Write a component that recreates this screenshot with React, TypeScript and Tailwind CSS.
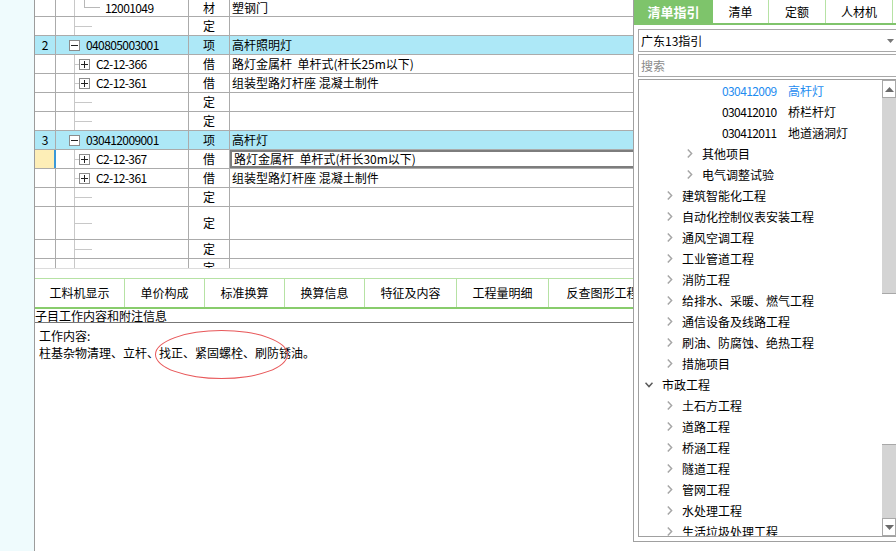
import React from 'react';

type Kind = 'mat' | 'ding' | 'item' | 'sub';

interface Row {
  kind: Kind;
  no?: string;
  code?: string;
  unit: string;
  name?: string;
  sel?: boolean;
  tall?: boolean;
  first?: boolean;
}

const rows: Row[] = [
  { kind: 'mat', code: '12001049', unit: '材', name: '塑钢门', first: true },
  { kind: 'ding', unit: '定' },
  { kind: 'item', no: '2', code: '040805003001', unit: '项', name: '高杆照明灯' },
  { kind: 'sub', code: 'C2-12-366', unit: '借', name: '路灯金属杆  单杆式(杆长25m以下)' },
  { kind: 'sub', code: 'C2-12-361', unit: '借', name: '组装型路灯杆座 混凝土制件' },
  { kind: 'ding', unit: '定' },
  { kind: 'ding', unit: '定' },
  { kind: 'item', no: '3', code: '030412009001', unit: '项', name: '高杆灯' },
  { kind: 'sub', code: 'C2-12-367', unit: '借', name: '路灯金属杆  单杆式(杆长30m以下)', sel: true },
  { kind: 'sub', code: 'C2-12-361', unit: '借', name: '组装型路灯杆座 混凝土制件' },
  { kind: 'ding', unit: '定' },
  { kind: 'ding', unit: '定', tall: true },
  { kind: 'ding', unit: '定' },
  { kind: 'ding', unit: '定' },
];

const bottomTabs = [
  { label: '工料机显示', w: 'w-[90px]' },
  { label: '单价构成', w: 'w-[80px]' },
  { label: '标准换算', w: 'w-[80px]' },
  { label: '换算信息', w: 'w-[80px]' },
  { label: '特征及内容', w: 'w-[92px]' },
  { label: '工程量明细', w: 'w-[92px]' },
  { label: '反查图形工程量', w: 'w-[120px]' },
];

type Node =
  | { t: 'code'; code: string; name: string; active?: boolean }
  | { t: 0 | 1 | 2; name: string };

const tree: Node[] = [
  { t: 'code', code: '030412009', name: '高杆灯', active: true },
  { t: 'code', code: '030412010', name: '桥栏杆灯' },
  { t: 'code', code: '030412011', name: '地道涵洞灯' },
  { t: 2, name: '其他项目' },
  { t: 2, name: '电气调整试验' },
  { t: 1, name: '建筑智能化工程' },
  { t: 1, name: '自动化控制仪表安装工程' },
  { t: 1, name: '通风空调工程' },
  { t: 1, name: '工业管道工程' },
  { t: 1, name: '消防工程' },
  { t: 1, name: '给排水、采暖、燃气工程' },
  { t: 1, name: '通信设备及线路工程' },
  { t: 1, name: '刷油、防腐蚀、绝热工程' },
  { t: 1, name: '措施项目' },
  { t: 0, name: '市政工程' },
  { t: 1, name: '土石方工程' },
  { t: 1, name: '道路工程' },
  { t: 1, name: '桥涵工程' },
  { t: 1, name: '隧道工程' },
  { t: 1, name: '管网工程' },
  { t: 1, name: '水处理工程' },
  { t: 1, name: '生活垃圾处理工程' },
];

function ExpandBox({ plus }: { plus?: boolean }) {
  return (
    <span className="flex h-[11px] w-[11px] shrink-0 items-center justify-center self-center border border-[#8c8c8c] bg-white">
      <svg width="7" height="7" viewBox="0 0 7 7">
        <path d={plus ? 'M0 3.5h7M3.5 0v7' : 'M0 3.5h7'} stroke="#222" strokeWidth="1" />
      </svg>
    </span>
  );
}

function CodeCell({ row }: { row: Row }) {
  if (row.kind === 'item') {
    return (
      <div className="flex h-full items-center pl-[13px]">
        <ExpandBox />
        <span className="ml-[6px] tracking-[-0.6px]">{row.code}</span>
      </div>
    );
  }
  return (
    <div className="flex h-full">
      <span className="ml-[18px] w-px self-stretch bg-[#c8c8c8]" />
      {row.kind === 'ding' && <span className="h-px w-[17px] self-center bg-[#c8c8c8]" />}
      {row.kind === 'sub' && (
        <>
          <span className="h-px w-[4px] self-center bg-[#c8c8c8]" />
          <ExpandBox plus />
          <span className="ml-[6px] self-center tracking-[-0.6px]">{row.code}</span>
        </>
      )}
      {row.kind === 'mat' && (
        <>
          <span className="ml-[9px] h-1/2 w-[16px] self-start border-b border-l border-[#b8b8b8]" />
          <span className="ml-[5px] self-center tracking-[-0.6px]">{row.code}</span>
        </>
      )}
    </div>
  );
}

function TableRow({ row }: { row: Row }) {
  const hl = row.kind === 'item';
  const h = row.first ? 'h-[17px]' : row.tall ? 'h-[33px]' : 'h-[19px]';
  return (
    <div className={`flex border-b border-[#ababab] ${h} ${hl ? 'bg-[#ade8f7]' : 'bg-white'}`}>
      <div
        className={`flex w-[21px] shrink-0 items-center justify-center border-r ${
          row.sel ? 'border-r-2 border-[#3a98d8] bg-[#fdeeb7]' : 'border-[#ababab]'
        }`}
      >
        {row.no}
      </div>
      <div className="w-[133px] shrink-0 border-r border-[#ababab]">
        <CodeCell row={row} />
      </div>
      <div className="flex w-[41px] shrink-0 items-center justify-center border-r border-[#ababab]">
        {row.unit}
      </div>
      <div
        className={`flex min-w-0 flex-1 items-center whitespace-pre pl-[2px] ${
          row.sel ? 'border-2 border-r-0 border-[#7d7d7d] pl-0' : ''
        }`}
      >
        {row.name}
      </div>
    </div>
  );
}

function Chevron({ down }: { down?: boolean }) {
  if (down) {
    return (
      <svg width="8" height="6" viewBox="0 0 8 6" className="shrink-0">
        <path d="M0.5 0.8 4 4.6 7.5 0.8" fill="none" stroke="#5a5a5a" strokeWidth="1.5" />
      </svg>
    );
  }
  return (
    <svg width="6" height="9" viewBox="0 0 6 9" className="shrink-0">
      <path d="M0.8 0.6 4.6 4.5 0.8 8.4" fill="none" stroke="#a6a6a6" strokeWidth="1.5" />
    </svg>
  );
}

function TreeItem({ node }: { node: Node }) {
  if (node.t === 'code') {
    return (
      <div
        className={`flex h-[21px] items-center whitespace-nowrap pl-[83px] ${
          node.active ? 'text-[#1e8cf0]' : 'text-black'
        }`}
      >
        <span className="w-[66px] tracking-[-0.6px]">{node.code}</span>
        <span>{node.name}</span>
      </div>
    );
  }
  if (node.t === 0) {
    return (
      <div className="flex h-[21px] items-center whitespace-nowrap pl-[6px]">
        <Chevron down />
        <span className="ml-[9px]">{node.name}</span>
      </div>
    );
  }
  return (
    <div
      className={`flex h-[21px] items-center whitespace-nowrap ${node.t === 2 ? 'pl-[48px]' : 'pl-[28px]'}`}
    >
      <Chevron />
      <span className="ml-[9px]">{node.name}</span>
    </div>
  );
}

function ScrollArrow({ up }: { up?: boolean }) {
  return (
    <div className="flex h-[18px] shrink-0 items-center justify-center border border-[#a8a8a8] bg-white">
      <svg width="9" height="5" viewBox="0 0 9 5">
        <path d={up ? 'M0 5 4.5 0 9 5z' : 'M0 0 4.5 5 9 0z'} fill="#6b6b6b" />
      </svg>
    </div>
  );
}

function GuidePanel() {
  return (
    <div className="flex h-[542px] w-[263px] shrink-0 flex-col border-b border-l border-[#a0a0a0] pl-[4px]">
      {/* tabs */}
      <div className="-ml-[4px] flex h-[25px] shrink-0 border-b-2 border-[#80c46c] text-[12px]">
        <div className="flex w-[79px] items-center justify-center bg-[#7ec46b] text-[13px] font-bold text-white">
          清单指引
        </div>
        <div className="flex w-[56px] items-center justify-center border-r border-[#b6e2a4]">清单</div>
        <div className="flex w-[57px] items-center justify-center border-r border-[#b6e2a4]">定额</div>
        <div className="flex w-[67px] items-center justify-center border-r border-[#b6e2a4]">人材机</div>
      </div>

      {/* select */}
      <div className="mt-[4px] flex h-[23px] shrink-0 items-center justify-between border border-r-0 border-[#a8a8a8] pl-[2px] pr-[2px]">
        <span>广东13指引</span>
        <svg width="7" height="4" viewBox="0 0 7 4">
          <path d="M0 0 3.5 4 7 0z" fill="#777" />
        </svg>
      </div>

      {/* search */}
      <div className="mt-[2px] flex h-[23px] shrink-0 items-center border border-r-0 border-[#a8a8a8] pl-[2px] text-[#8a8a8a]">
        搜索
      </div>

      {/* list */}
      <div className="mb-[4px] mt-[2px] flex min-h-0 flex-1 border border-r-0 border-[#a0a0a0]">
        <div className="min-w-0 flex-1 overflow-hidden">
          {tree.map((n, i) => (
            <TreeItem key={i} node={n} />
          ))}
        </div>
        <div className="flex w-[14px] shrink-0 flex-col">
          <ScrollArrow up />
          <div className="h-[195px] bg-[#d4d4d4]" />
          <div className="h-[152px] border-y border-[#a8a8a8] bg-white" />
          <div className="flex-1 bg-[#d4d4d4]" />
          <ScrollArrow />
        </div>
      </div>
    </div>
  );
}

export default function App() {
  return (
    <div className="flex h-[551px] w-[896px] overflow-hidden bg-white font-['Noto_Sans_CJK_SC',sans-serif] text-[12px] leading-none text-black">
      <div className="w-[34px] shrink-0 bg-[#effbfd]" />

      <div className="flex w-[599px] shrink-0 flex-col border-l border-[#9c9c9c]">
        {/* grid */}
        <div className="h-[269px] shrink-0 overflow-hidden border-b border-[#dcdcdc]">
          {rows.map((r, i) => (
            <TableRow key={i} row={r} />
          ))}
        </div>
        <div className="h-[9px] shrink-0" />

        {/* tabs */}
        <div className="flex h-[31px] shrink-0 overflow-hidden border-b-2 border-t border-b-[#88cc6c] border-t-[#b6e2a4]">
          {bottomTabs.map((t) => (
            <div
              key={t.label}
              className={`flex shrink-0 items-center justify-center whitespace-nowrap border-r border-[#b6e2a4] ${t.w}`}
            >
              {t.label}
            </div>
          ))}
        </div>

        <div className="h-[13px] shrink-0 leading-[13px]">子目工作内容和附注信息</div>

        {/* notes */}
        <div className="relative flex-1 border-t border-[#777] px-[4px] pt-[4px] leading-[17px]">
          <div>工作内容:</div>
          <div>柱基杂物清理、立杆、找正、紧固螺栓、刷防锈油。</div>
          <div className="pointer-events-none absolute left-[120px] top-[7px] h-[49px] w-[133px] rounded-[50%] border border-[#e8585a]" />
        </div>
      </div>

      <GuidePanel />
    </div>
  );
}
